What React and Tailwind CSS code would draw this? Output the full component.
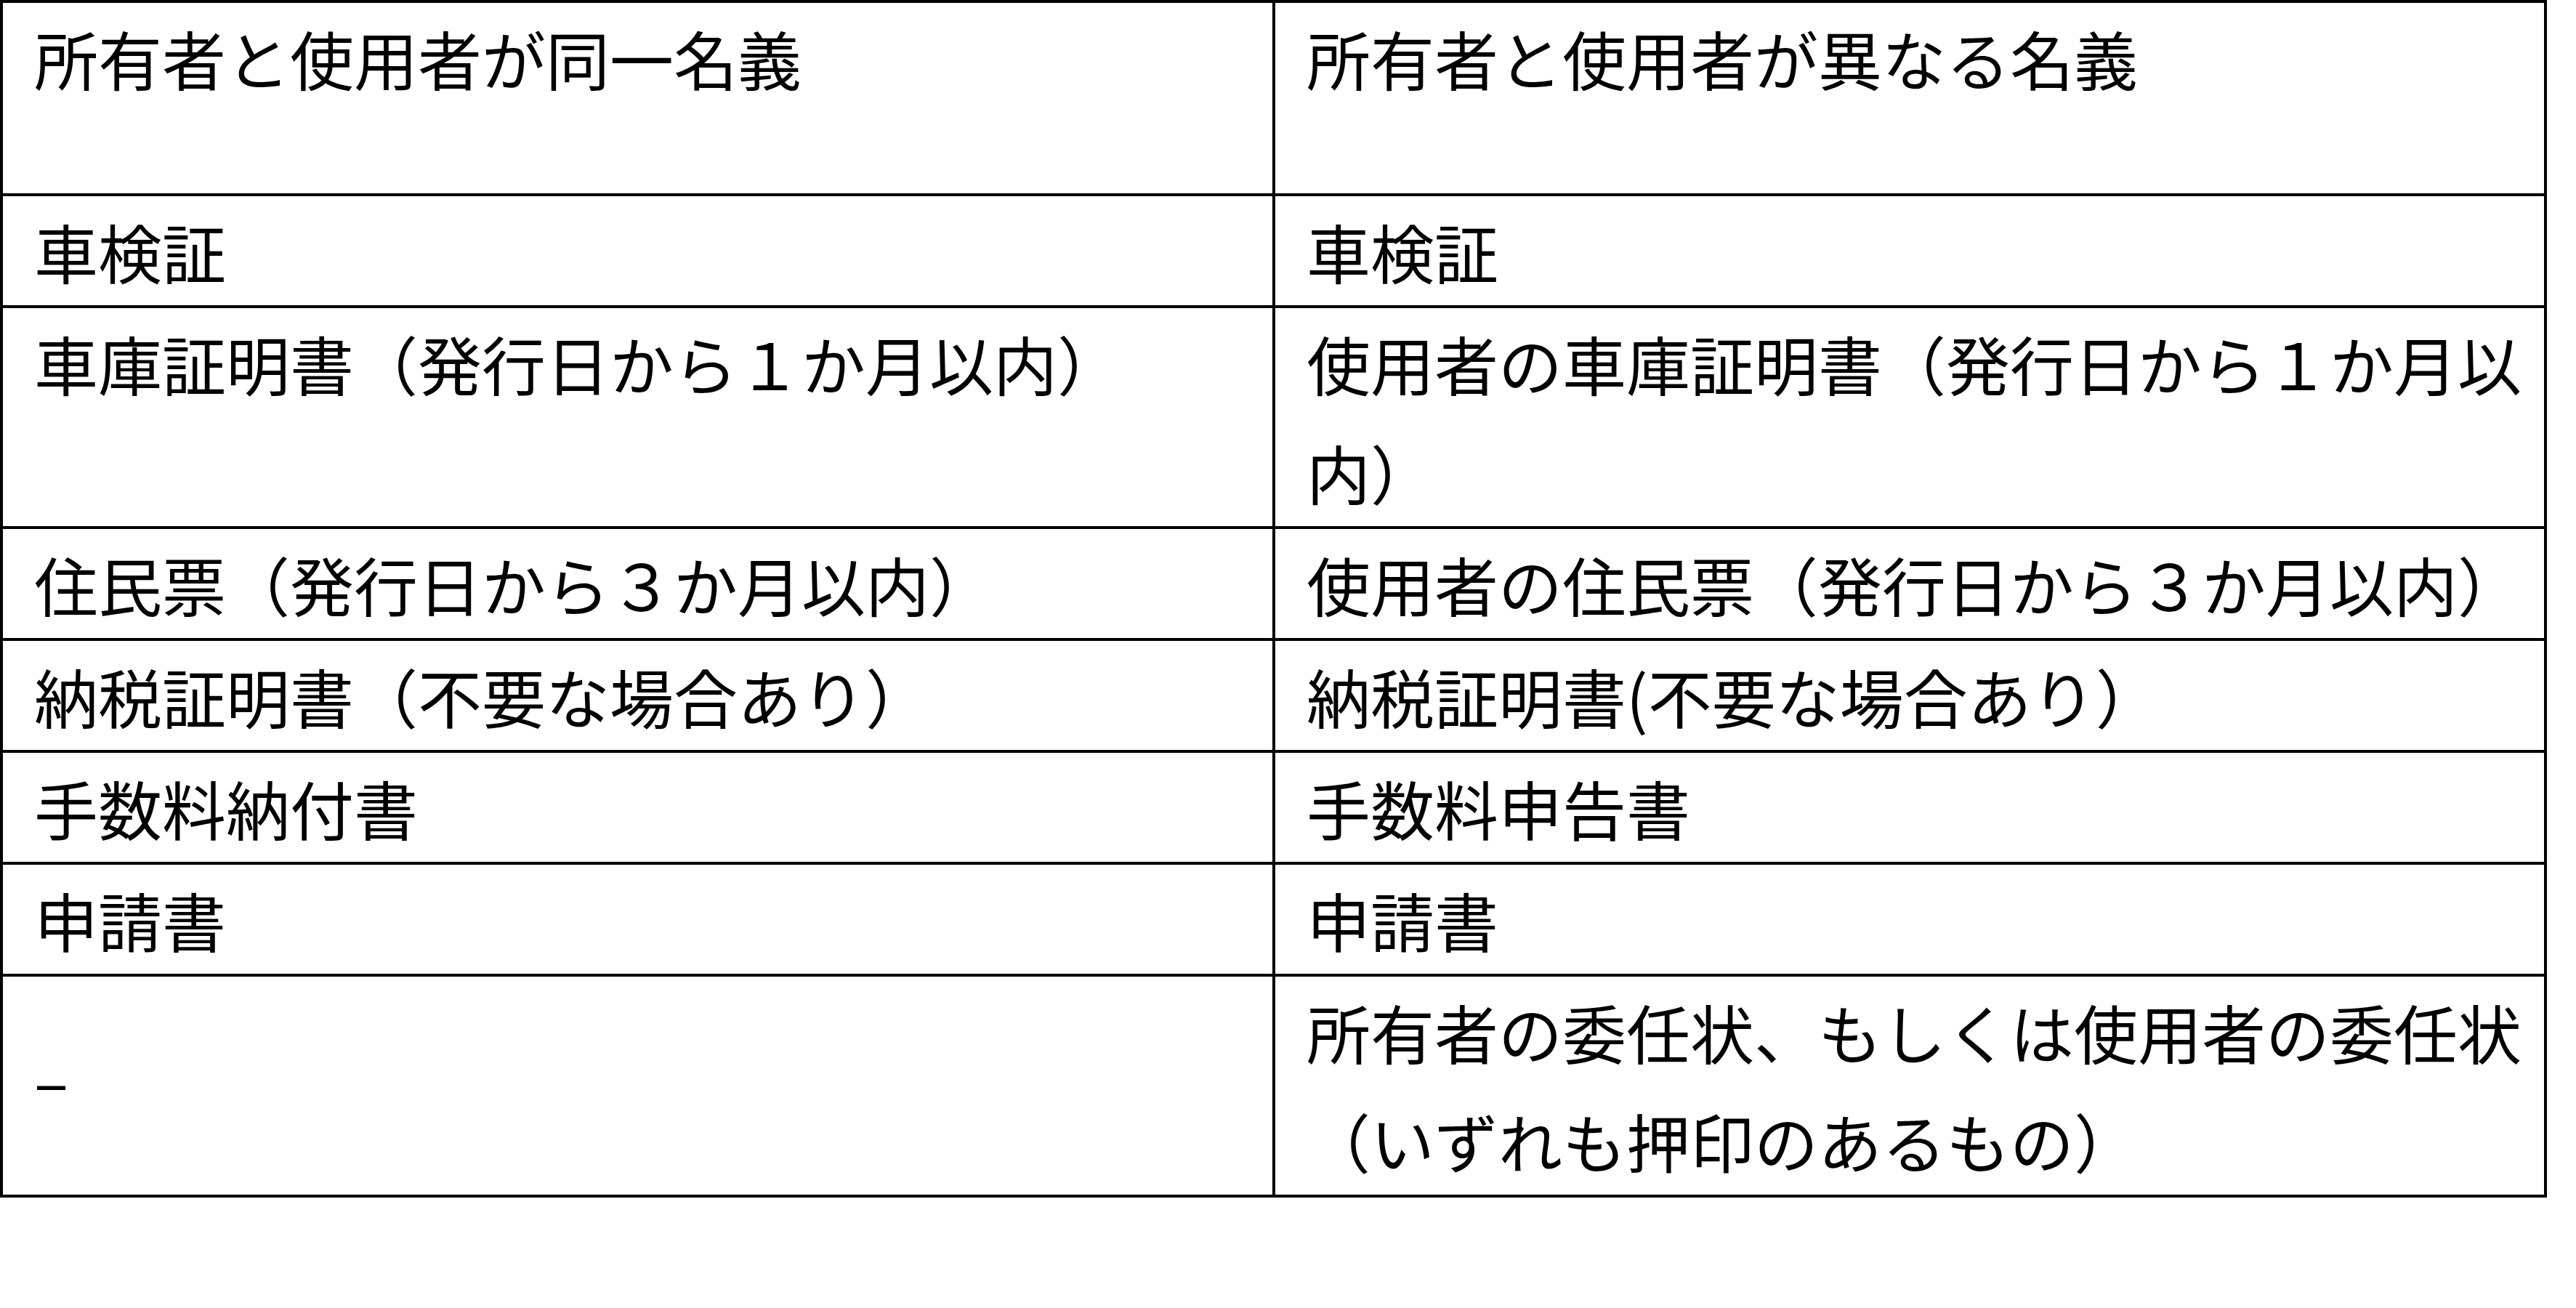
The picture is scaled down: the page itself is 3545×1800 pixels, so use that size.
import React from "react";

const cell =
  "border-r-4 border-b-4 border-black pl-[43px] text-[88px] leading-[150px] whitespace-nowrap text-black";

const rows = [
  { left: "車検証", right: "車検証" },
  {
    left: "車庫証明書（発行日から１か月以内）",
    right: (
      <>
        使用者の車庫証明書（発行日から１か月以
        <br />
        内）
      </>
    ),
  },
  {
    left: "住民票（発行日から３か月以内）",
    right: "使用者の住民票（発行日から３か月以内）",
  },
  {
    left: "納税証明書（不要な場合あり）",
    right: "納税証明書(不要な場合あり）",
  },
  { left: "手数料納付書", right: "手数料申告書" },
  { left: "申請書", right: "申請書" },
];

export default function App() {
  return (
    <div className="w-[3545px] h-[1800px] bg-white font-['Noto_Sans_CJK_JP','Noto_Sans_CJK_SC',sans-serif]">
      <div className="grid grid-cols-[1751px_1750px] w-[3505px] border-l-4 border-t-4 border-black">
        <div className={`${cell} h-[266px]`}>所有者と使用者が同一名義</div>
        <div className={`${cell} h-[266px]`}>所有者と使用者が異なる名義</div>
        {rows.map((r, i) => (
          <React.Fragment key={i}>
            <div className={cell}>{r.left}</div>
            <div className={cell}>{r.right}</div>
          </React.Fragment>
        ))}
        <div className={`${cell} flex items-center`}>
          <span className="-translate-y-[10px]">–</span>
        </div>
        <div className={cell}>
          所有者の委任状、もしくは使用者の委任状
          <br />
          （いずれも押印のあるもの）
        </div>
      </div>
    </div>
  );
}
